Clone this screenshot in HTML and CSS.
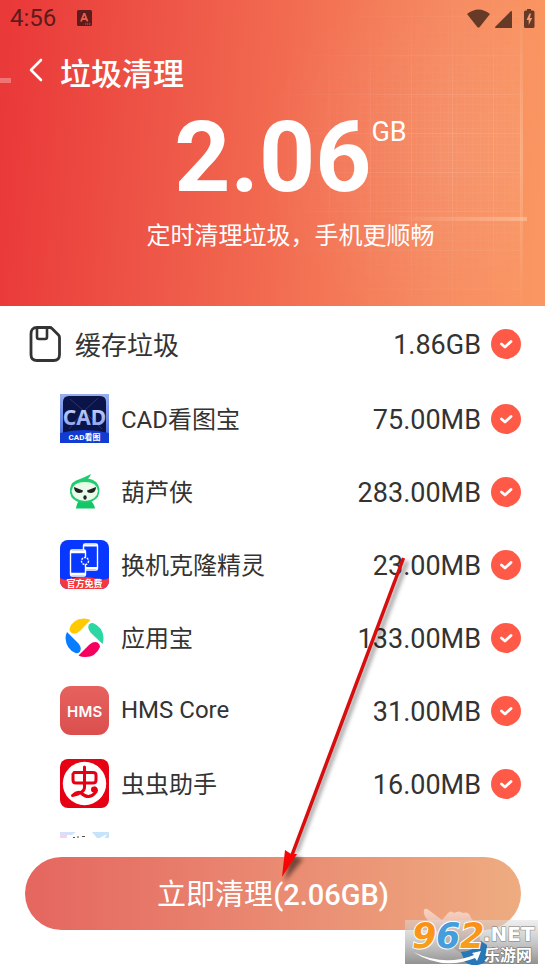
FILE: index.html
```html
<!DOCTYPE html>
<html lang="zh-CN">
<head>
  <meta charset="UTF-8">
  <meta name="viewport" content="width=device-width, initial-scale=1.0">
  <title>垃圾清理</title>
  <link rel="stylesheet" href="styles.css">
</head>
<body>
  <div class="screen">
    <header class="hero">
      <svg class="hero-grid" viewBox="0 0 345 306" aria-hidden="true">
        <defs>
          <pattern id="fine" width="8" height="8" patternUnits="userSpaceOnUse">
            <path d="M0 .5H8M.5 0V8" stroke="#fff" stroke-opacity=".04"/>
          </pattern>
          <pattern id="wide" width="41" height="39" patternUnits="userSpaceOnUse" y="16" x="6">
            <path d="M0 .5H41M.5 0V39" stroke="#fff" stroke-opacity=".12"/>
          </pattern>
          <linearGradient id="beam">
            <stop offset="0" stop-color="#ffd0b0" stop-opacity="0"/>
            <stop offset="1" stop-color="#ffd0b0" stop-opacity=".5"/>
          </linearGradient>
          <radialGradient id="fade" cx=".75" cy=".5" r=".6">
            <stop offset="0" stop-color="#fff"/>
            <stop offset="1" stop-color="#000"/>
          </radialGradient>
          <mask id="gridMask"><rect width="345" height="306" fill="url(#fade)"/></mask>
          <linearGradient id="edge" x2="0" y2="1">
            <stop offset="0" stop-color="#ffd0b0" stop-opacity="0"/>
            <stop offset=".5" stop-color="#ffd0b0" stop-opacity=".4"/>
            <stop offset="1" stop-color="#ffd0b0" stop-opacity="0"/>
          </linearGradient>
        </defs>
        <g mask="url(#gridMask)">
          <rect width="321" height="306" fill="#fff" fill-opacity=".07"/>
          <rect width="321" height="306" fill="url(#fine)"/>
          <rect width="321" height="306" fill="url(#wide)"/>
        </g>
        <rect x="190" y="217" width="137" height="4" fill="url(#beam)"/>
        <rect x="320" width="3" height="306" fill="url(#edge)"/>
      </svg>

      <div class="status-bar">
        <span class="clock">4:56</span>
        <svg class="status-app" viewBox="0 0 15 16" width="15" height="16" aria-hidden="true">
          <rect width="15" height="16" rx="1.500" fill="#5d1b1b"/>
          <path d="M4 11.500 7 4h.6l3 7.500M5 9h4.600" fill="none" stroke="#ee5a4c" stroke-width="1.800"/>
          <path d="M8 14h1.200M10 14h1.200M12 14h1.200" stroke="#ee5a4c" stroke-width="1.200"/>
        </svg>
        <svg class="status-icons" viewBox="0 0 68 21" width="68" height="21" aria-hidden="true">
          <g fill="#673a28">
            <path d="M0 6Q11.500-3 23 6L12.500 19.200Q11.500 20 10.500 19.200Z"/>
            <path d="M45 4V20H28.500q-1-.5 0-1.500L43.500 3.500Q45 2.500 45 4Z"/>
            <path d="M60 1h4v1.500h2q1.500 0 1.500 1.500v14.500q0 1.500-1.500 1.500h-7.500q-1.500 0-1.500-1.500V4q0-1.500 1.500-1.500H60Z"/>
          </g>
          <path d="M62.500 5.500 59.500 12h2.200v5l3.500-7h-2.300l1-4.500Z" fill="#f89a70"/>
        </svg>
      </div>

      <div class="title-bar">
        <button class="back" type="button" aria-label="返回">
          <svg viewBox="0 0 14 24" width="14" height="24" aria-hidden="true">
            <path d="M12 2 2 12 12 22" fill="none" stroke="#fff" stroke-width="2.600" stroke-linecap="round" stroke-linejoin="round"/>
          </svg>
        </button>
        <h1>垃圾清理</h1>
      </div>

      <div class="summary">
        <p class="total">2.06<span class="unit">GB</span></p>
        <p class="slogan">定时清理垃圾，手机更顺畅</p>
      </div>
    </header>

    <main class="junk">
      <div class="group-row">
        <svg class="group-icon" viewBox="0 0 32 36" width="32" height="36" aria-hidden="true">
          <path d="M8 1.500H21Q22 1.500 23 2.500L29.500 9Q30.500 10 30.500 11.500V28.500Q30.500 34.500 24.500 34.500H8Q2 34.500 2 28.500V8Q2 1.500 8 1.500Z" fill="none" stroke="#333" stroke-width="2.800" stroke-linejoin="round"/>
          <path d="M8 2V11Q8 13 10 13H16Q18 13 18 11V2" fill="none" stroke="#333" stroke-width="2.600"/>
        </svg>
        <label class="group-name" for="cache">缓存垃圾</label>
        <span class="size">1.86GB</span>
        <input class="tick" type="checkbox" id="cache" checked>
      </div>

      <ul class="apps">
        <li class="app-row">
          <svg class="app-icon" viewBox="0 0 49 49" aria-hidden="true">
            <defs>
              <linearGradient id="cadEdge" x2="0" y2="1"><stop offset="0" stop-color="#9aaef0"/><stop offset="1" stop-color="#3d63dc"/></linearGradient>
              <linearGradient id="cadText" x2="0" y2="1"><stop offset="0" stop-color="#d3ddff"/><stop offset="1" stop-color="#7e99ed"/></linearGradient>
            </defs>
            <rect width="49" height="49" fill="url(#cadEdge)"/>
            <path d="M9 2H40Q46 2 46 8V40H3V8Q3 2 9 2Z" fill="#0a1448"/>
            <path d="M10 5 24 17 38 4M24 17 9 35M24 17 42 35" stroke="#2b3768" fill="none"/>
            <text x="24.500" y="31" text-anchor="middle" class="cad-big" fill="url(#cadText)">CAD</text>
            <path d="M0 39Q24 33 49 39V49H0Z" fill="#123bd2"/>
            <text x="24.500" y="46" text-anchor="middle" class="cad-small" fill="#fff">CAD看图</text>
          </svg>
          <label class="app-name" for="app1">CAD看图宝</label>
          <span class="size">75.00MB</span>
          <input class="tick" type="checkbox" id="app1" checked>
        </li>
        <li class="app-row">
          <svg class="app-icon" viewBox="0 0 49 49" aria-hidden="true">
            <path d="M16 41Q17 35 20 33H30Q34 36 35 41.500H15.500Z" fill="#12c767"/>
            <path d="M10 22Q11 14 20 12Q25 10 31 7Q30 10 28 11.500Q38 13 39.500 22Q40 31 32 34.500Q25 37 17 34.500Q9 31 10 22Z" fill="#20cc70"/>
            <path d="M11.500 24Q13 15 25 15Q37 15 38 24Q37 33 25 34Q12.500 33 11.500 24Z" fill="#e9fbe9"/>
            <path d="M14 20 23 23.500Q23 26 19 26Q14 25.500 14 20ZM36 20 27 23.500Q27 26 31 26Q36 25.500 36 20Z" fill="#222"/>
            <ellipse cx="25" cy="30.500" rx="1.700" ry="2.200" fill="#222"/>
          </svg>
          <label class="app-name" for="app2">葫芦侠</label>
          <span class="size">283.00MB</span>
          <input class="tick" type="checkbox" id="app2" checked>
        </li>
        <li class="app-row">
          <svg class="app-icon rounded" viewBox="0 0 49 49" aria-hidden="true">
            <rect width="49" height="49" fill="#0838ff"/>
            <g fill="#0838ff" stroke="#fff" stroke-width="1.400">
              <rect x="23.500" y="4" width="14" height="26" rx="1.500"/>
              <path d="M24 5.500H37M24 28H37" stroke-width="2"/>
              <rect x="10.500" y="10" width="15" height="26" rx="1.500"/>
              <path d="M11 12H25M11 34H25" stroke-width="2.400"/>
              <circle cx="25" cy="21" r="3.500" stroke-dasharray="2 1"/>
            </g>
            <path d="M0 38Q4 41 10 39Q24 35 38 39Q45 41 49 38V49H0Z" fill="#f6373b"/>
            <text x="24.500" y="47" text-anchor="middle" class="clone-text" fill="#fff">官方免费</text>
          </svg>
          <label class="app-name" for="app3">换机克隆精灵</label>
          <span class="size">23.00MB</span>
          <input class="tick" type="checkbox" id="app3" checked>
        </li>
        <li class="app-row">
          <svg class="app-icon" viewBox="0 0 49 49" aria-hidden="true">
            <path d="M9.500 16Q12 6 24 5.500Q28 5.500 30.500 7L20 18Q15 22 11.500 20Q9 18.500 9.500 16Z" fill="#ffcb00"/>
            <path d="M33 10Q43 14 43.500 25Q43.500 28 42.500 31L30.500 19.500Q27 15 29 11.500Q30.500 9.500 33 10Z" fill="#2bd8a3"/>
            <path d="M40 34Q36 44 25 44Q21.500 44 18.500 42.500L29.500 31.500Q34 28 37.500 29.500Q40 31 40 34Z" fill="#f5005f"/>
            <path d="M15.500 40Q6 36 5.500 25Q5.500 22 7 19L18.500 30.500Q22 35 20 38.500Q18.500 41 15.500 40Z" fill="#087dff"/>
          </svg>
          <label class="app-name" for="app4">应用宝</label>
          <span class="size">133.00MB</span>
          <input class="tick" type="checkbox" id="app4" checked>
        </li>
        <li class="app-row">
          <svg class="app-icon hms" viewBox="0 0 49 49" aria-hidden="true">
            <defs><linearGradient id="hmsBg" x2="0" y2="1"><stop offset="0" stop-color="#e6625f"/><stop offset="1" stop-color="#da4f4e"/></linearGradient></defs>
            <rect width="49" height="49" fill="url(#hmsBg)"/>
            <text x="7" y="30.500" class="hms-text" fill="#fff">H</text>
            <text x="18.500" y="30.500" class="hms-text" fill="#fff">M</text>
            <text x="32.500" y="30.500" class="hms-text" fill="#fff">S</text>
          </svg>
          <label class="app-name" for="app5">HMS Core</label>
          <span class="size">31.00MB</span>
          <input class="tick" type="checkbox" id="app5" checked>
        </li>
        <li class="app-row">
          <svg class="app-icon rounded" viewBox="0 0 49 49" aria-hidden="true">
            <rect width="49" height="49" fill="#e60013"/>
            <circle cx="24.500" cy="24.500" r="21.700" fill="#fff"/>
            <g fill="none" stroke="#e60013" stroke-width="3" stroke-linecap="round" stroke-linejoin="round">
              <path d="M14 13.500H33Q36 13.500 36 16V21Q36 24 33 24H16Q13 24 13 21V15"/>
              <path d="M24.500 8V29Q24 34 12.500 36.500Q17 32 21 34Q29 41 35 34Q38 31 35 29"/>
            </g>
            <circle cx="34" cy="30.500" r="3" fill="#e60013"/>
          </svg>
          <label class="app-name" for="app6">虫虫助手</label>
          <span class="size">16.00MB</span>
          <input class="tick" type="checkbox" id="app6" checked>
        </li>
        <li class="app-row">
          <svg class="app-icon" viewBox="0 0 49 49" aria-hidden="true">
            <path d="M0 0H16L12 3H4L0 5Z" fill="#cfe4fb"/>
            <path d="M0 2H7V7H0ZM33 0H42L37 6Z" fill="#efd5f2"/>
            <path d="M32 0H49V7H44L47 2L38 7Z" fill="#c5e3fa"/>
            <path d="M13 5.500H15M17 5H19M22 4.500H25" stroke="#555"/>
          </svg>
        </li>
      </ul>
    </main>

    <footer class="actions">
      <button class="clean-btn" type="button">立即清理<span class="amount">(2.06GB)</span></button>
    </footer>

    <svg class="pointer" viewBox="0 0 136 334" width="136" height="334" aria-hidden="true">
      <path d="M128 6 17 298" stroke="#000" stroke-opacity=".4" stroke-width="4" class="pointer-shadow"/>
      <path d="M6 326 11 299 24 304Z" fill="#000" fill-opacity=".5" class="pointer-shadow"/>
      <path d="M124.500 3 13 300" stroke="#d90d0d" stroke-width="3.500"/>
      <path d="M3 322 6 295 12 299 18 299Z" fill="#f90505"/>
    </svg>

    <div class="watermark">
      <svg viewBox="0 0 140 58" width="140" height="58" aria-hidden="true">
        <defs>
          <linearGradient id="wmBg" x2="0" y2="1"><stop offset="0" stop-color="#ddd" stop-opacity=".5"/><stop offset="1" stop-color="#858585" stop-opacity=".9"/></linearGradient>
          <linearGradient id="wmOrange" x2="0" y2="1"><stop offset="0" stop-color="#ff8a13"/><stop offset="1" stop-color="#f3a51f"/></linearGradient>
          <linearGradient id="wmHand" x2="0" y2="1"><stop offset="0" stop-color="#fbd3c2"/><stop offset="1" stop-color="#c68f7d"/></linearGradient>
        </defs>
        <path d="M21 3Q22 0 27 4L39 13L45 6Q48 3 51 6Q56 3 60 6Q66 4 68 11Q75 16 77 33L84 42L68 52Q50 43 39 30L23 11Q20 7 21 3Z" fill="url(#wmHand)"/>
        <rect x="2" y="13" width="133" height="44" fill="url(#wmBg)"/>
        <path d="M58 45Q72 44 78 34L84 38V54Q72 62 62 55Z" fill="#2877b6"/>
        <g class="wm-num" stroke="#fff" stroke-width="2" paint-order="stroke">
          <text x="9" y="41" fill="url(#wmOrange)">9</text>
          <text x="33" y="41" fill="#459edb">6</text>
          <text x="57" y="41" fill="url(#wmOrange)">2</text>
        </g>
        <path d="M10 45Q42 60 71 48L69 46L78 44L74 54L72 51Q40 64 10 45Z" fill="#fff"/>
        <text x="80" y="34" class="wm-net" fill="#fff" stroke="#777" stroke-width="1" paint-order="stroke">.NET</text>
        <text x="81" y="54" class="wm-cn" fill="#fff" stroke="#686868" stroke-width="1" paint-order="stroke">乐游网</text>
      </svg>
    </div>
  </div>
</body>
</html>
```
FILE: styles.css
```css
* {
  box-sizing: border-box;
}
body {
  margin: 0;
  background: #fff;
  color: #333;
  font-family: Roboto, "Noto Sans CJK SC", sans-serif;
}
h1, p, ul {
  margin: 0;
  padding: 0;
}
button {
  border: none;
  font-family: inherit;
  cursor: pointer;
}
.screen {
  position: relative;
  display: flex;
  flex-direction: column;
  height: 100vh;
  overflow: hidden;
}

/* Cabecera */
.hero {
  position: relative;
  flex-shrink: 0;
  padding-bottom: 52px;
  background: linear-gradient(94deg, #ea3939 2%, #ed5145 25%, #f26c51 52%, #f68a60 80%, #fa9662 98%);
  color: #fff;
}
.hero::before {
  content: "";
  position: absolute;
  left: 0;
  top: 78px;
  width: 11px;
  height: 5px;
  background: rgba(255, 255, 255, 0.3);
}
.hero-grid {
  position: absolute;
  top: 0;
  right: 0;
  width: 345px;
  height: 100%;
}
.status-bar,
.title-bar,
.summary {
  position: relative;
}
.status-bar {
  display: flex;
  align-items: center;
  height: 36px;
  padding: 0 10px;
}
.clock {
  width: 67px;
  color: #5d1b1b;
  font-size: 24px;
  line-height: 36px;
}
.status-icons {
  margin-left: auto;
}
.title-bar {
  display: flex;
  align-items: center;
  height: 74px;
  padding: 4px 0 0 22px;
}
.back {
  width: 28px;
  height: 40px;
  margin: 0 10px 8px 0;
  padding: 0;
  background: none;
}
h1 {
  font-size: 31px;
  font-weight: 500;
  line-height: 40px;
}
.summary {
  padding-left: 36px;
  text-align: center;
}
.total {
  display: flex;
  justify-content: center;
  align-items: flex-start;
  font-size: 98px;
  font-weight: 700;
  line-height: 96px;
}
.unit {
  font-size: 27px;
  font-weight: 400;
  line-height: 44px;
}
.slogan {
  margin-top: 12px;
  font-size: 24px;
  line-height: 36px;
}

/* Lista */
.junk {
  flex: 1;
  min-height: 0;
  overflow: hidden;
}
.group-row,
.app-row {
  display: flex;
  align-items: center;
  padding-right: 24px;
}
.group-row {
  height: 76px;
  padding-left: 29px;
}
.group-icon {
  margin-right: 14px;
}
.group-name {
  padding-bottom: 2px;
  font-size: 26px;
}
.apps {
  list-style: none;
}
.app-row {
  height: 73px;
  padding-left: 60px;
}
.app-icon {
  width: 49px;
  height: 49px;
  margin-right: 12px;
}
.rounded {
  border-radius: 8px;
}
.hms {
  border-radius: 11px;
}
.app-name {
  padding-bottom: 2px;
  font-size: 24px;
}
.size {
  margin-left: auto;
  padding-top: 2px;
  font-size: 27px;
}
.tick {
  appearance: none;
  width: 30px;
  height: 30px;
  margin: 0 0 0 10px;
  border-radius: 50%;
  background: #e0e0e0;
  cursor: pointer;
}
.tick:checked {
  background: #ff5a47 url("data:image/svg+xml,%3Csvg xmlns='http://www.w3.org/2000/svg' viewBox='0 0 30 30'%3E%3Cpath d='M10.500 15 14 18 20 12.500' fill='none' stroke='%23fff' stroke-width='2.800' stroke-linecap='round' stroke-linejoin='round'/%3E%3C/svg%3E");
}
.cad-big {
  font-family: "Noto Sans", sans-serif;
  font-size: 21px;
  font-weight: 700;
}
.cad-small {
  font-size: 8px;
  font-weight: 700;
}
.clone-text {
  font-size: 9px;
  font-weight: 700;
}
.hms-text {
  font-family: Inter, sans-serif;
  font-size: 15px;
  font-weight: 600;
}

/* Botón inferior */
.actions {
  flex-shrink: 0;
  padding: 19px 24px 40px 25px;
}
.clean-btn {
  display: block;
  width: 100%;
  height: 73px;
  padding-bottom: 4px;
  border-radius: 37px;
  background: linear-gradient(90deg, #e5665f, #e98670 45%, #eeac80);
  color: #fff;
  font-size: 29px;
  font-weight: 400;
}
.amount {
  font-weight: 500;
}

/* Flecha y marca de agua */
.pointer {
  position: absolute;
  right: 130px;
  bottom: 81px;
  fill: none;
  pointer-events: none;
}
.pointer-shadow {
  filter: blur(2px);
}
.watermark {
  position: absolute;
  right: 2px;
  bottom: 5px;
  height: 58px;
}
.wm-num {
  font-family: "DejaVu Sans", sans-serif;
  font-size: 35px;
  font-weight: 700;
  font-style: italic;
}
.wm-net {
  font-family: "DejaVu Sans", sans-serif;
  font-size: 20px;
  font-weight: 700;
}
.wm-cn {
  font-size: 16px;
  font-weight: 700;
}
```
